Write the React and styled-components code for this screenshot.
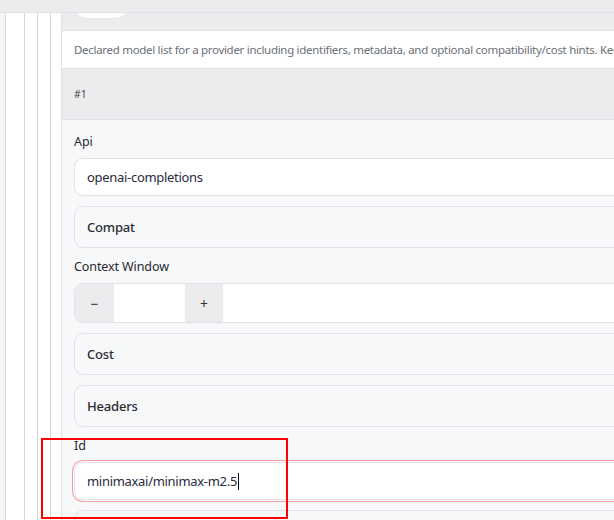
import React from "react";
import styled, { createGlobalStyle } from "styled-components";

const colors = {
  band: "#ececee",
  line: "#e2e2e6",
  rail: "#d6d6da",
  soft: "#f7f8fa",
  text: "#2c2c30",
  muted: "#6b6f78",
};

const GlobalStyle = createGlobalStyle`
  html, body {
    margin: 0;
    padding: 0;
    background: #ffffff;
    overflow: hidden;
  }
  body {
    font-family: "Noto Sans", "Open Sans", sans-serif;
    color: ${colors.text};
  }
`;

const Page = styled.div`
  position: relative;
  width: 614px;
  height: 520px;
  overflow: hidden;
`;

const TopBand = styled.div`
  height: 12px;
  background: ${colors.band};
  border-bottom: 1px solid ${colors.line};
`;

const Gutter = styled.div`
  background: #f3f4f6;
  padding-left: 5px;
`;

const Rail = styled.div`
  background: #ffffff;
  border-left: 1px solid ${colors.rail};
  padding-left: ${(p) => p.$pad}px;
`;

const Panel = styled.div`
  width: 760px;
  border-left: 1px solid ${colors.line};
  background: ${colors.soft};
`;

const PanelHead = styled.div`
  height: 17px;
  background: ${colors.band};
  border-bottom: 1px solid ${colors.line};
  padding-left: 15px;
`;

const HeadButton = styled.div`
  width: 47px;
  height: 5px;
  background: #ffffff;
  border: 1px solid #e6e6ea;
  border-top: none;
  border-radius: 0 0 12px 12px / 0 0 6px 6px;
`;

const Description = styled.div`
  height: 37px;
  display: flex;
  align-items: center;
  padding-left: 12px;
  background: #ffffff;
  border-bottom: 1px solid ${colors.line};
  font-size: 11.5px;
  letter-spacing: -0.3px;
  color: ${colors.muted};
  white-space: nowrap;
`;

const ItemHead = styled.div`
  height: 50px;
  display: flex;
  align-items: center;
  padding-left: 12px;
  background: ${colors.band};
  border-bottom: 1px solid ${colors.line};
  font-size: 10.5px;
  color: #4a4a50;
`;

const ItemBody = styled.div`
  display: flex;
  flex-direction: column;
  gap: 10px;
  padding: 13px 12px 20px;
`;

const Field = styled.div`
  display: flex;
  flex-direction: column;
  gap: 7px;
`;

const Label = styled.div`
  font-size: 12.5px;
  line-height: 18px;
  font-weight: 400;
  letter-spacing: -0.1px;
  color: #2a2a2e;
`;

const TextInput = styled.div`
  height: 36px;
  display: flex;
  align-items: center;
  padding-left: 12px;
  background: #ffffff;
  border: 1px solid ${colors.line};
  border-radius: 9px;
  font-size: 13px;
  letter-spacing: -0.3px;
  color: #2a2a40;
  box-shadow: ${(p) =>
    p.$focus ? "0 0 0 1px #ffffff, 0 0 0 2px #f4a0a0" : "none"};
`;

const Caret = styled.span`
  display: inline-block;
  width: 1px;
  height: 17px;
  margin-left: 1px;
  background: #111;
`;

const Collapsible = styled.div`
  height: 40px;
  display: flex;
  align-items: center;
  padding-left: 12px;
  background: ${colors.soft};
  border: 1px solid ${colors.line};
  border-radius: 9px;
  font-size: 13px;
  font-weight: 500;
  letter-spacing: -0.2px;
  color: #2c2c30;
`;

const NumberGroup = styled.div`
  height: 38px;
  display: flex;
  background: #ffffff;
  border: 1px solid ${colors.line};
  border-radius: 9px;
  overflow: hidden;
`;

const StepButton = styled.div`
  width: ${(p) => p.$w}px;
  display: flex;
  align-items: center;
  justify-content: center;
  background: ${colors.band};
  font-size: 14px;
  color: #333;
`;

const NumberField = styled.div`
  width: 71px;
  background: #ffffff;
`;

const Annotation = styled.div`
  position: absolute;
  left: 41px;
  top: 438px;
  width: 243px;
  height: 77px;
  border: 2px solid #ff0000;
  pointer-events: none;
`;

export default function App() {
  return (
    <Page>
      <GlobalStyle />
      <TopBand />
      <Gutter>
        <Rail $pad={18}>
          <Rail $pad={12}>
            <Rail $pad={12}>
              <Rail $pad={10}>
                <Panel>
                  <PanelHead>
                    <HeadButton />
                  </PanelHead>
                  <Description>
                    Declared model list for a provider including identifiers,
                    metadata, and optional compatibility/cost hints. Keep
                    entries aligned with what the provider actually serves.
                  </Description>
                  <ItemHead>#1</ItemHead>
                  <ItemBody>
                    <Field>
                      <Label>Api</Label>
                      <TextInput>openai-completions</TextInput>
                    </Field>
                    <Collapsible>Compat</Collapsible>
                    <Field>
                      <Label>Context Window</Label>
                      <NumberGroup>
                        <StepButton $w={39}>−</StepButton>
                        <NumberField />
                        <StepButton $w={38}>+</StepButton>
                      </NumberGroup>
                    </Field>
                    <Collapsible>Cost</Collapsible>
                    <Collapsible>Headers</Collapsible>
                    <Field>
                      <Label>Id</Label>
                      <TextInput $focus>
                        minimaxai/minimax-m2.5
                        <Caret />
                      </TextInput>
                    </Field>
                    <Collapsible />
                  </ItemBody>
                </Panel>
              </Rail>
            </Rail>
          </Rail>
        </Rail>
      </Gutter>
      <Annotation />
    </Page>
  );
}
